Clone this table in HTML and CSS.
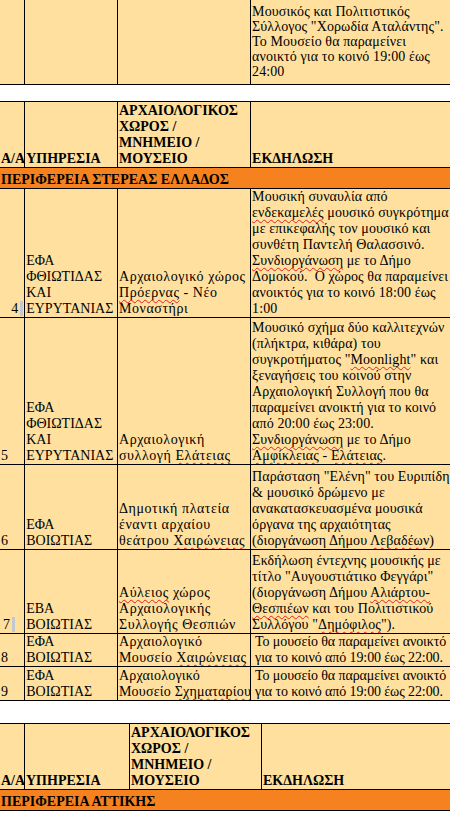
FILE: index.html
```html
<!DOCTYPE html>
<html lang="el">
<head>
<meta charset="utf-8">
<title>Εκδηλώσεις</title>
<link rel="stylesheet" href="styles.css">
</head>
<body>
<div class="page">

<table class="grid t-first">
<colgroup><col class="w1"><col class="w2"><col class="w3"><col class="w4"></colgroup>
<tr class="r-first">
<td></td><td></td><td></td>
<td class="event">Μουσικός και Πολιτιστικός<br>Σύλλογος "Χορωδία Αταλάντης".<br>Το Μουσείο θα παραμείνει<br>ανοικτό για το κοινό 19:00 έως<br>24:00</td>
</tr>
</table>

<table class="grid t-second">
<colgroup><col class="w1"><col class="w2"><col class="w3"><col class="w4"></colgroup>
<tr class="r-head">
<th>Α/Α</th><th>ΥΠΗΡΕΣΙΑ</th><th>ΑΡΧΑΙΟΛΟΓΙΚΟΣ<br>ΧΩΡΟΣ /<br>ΜΝΗΜΕΙΟ /<br>ΜΟΥΣΕΙΟ</th><th>ΕΚΔΗΛΩΣΗ</th>
</tr>
<tr class="r-region"><td colspan="4">ΠΕΡΙΦΕΡΕΙΑ ΣΤΕΡΕΑΣ ΕΛΛΑΔΟΣ</td></tr>
<tr class="r4">
<td class="num num-right">4<span class="mark"></span></td>
<td>ΕΦΑ<br>ΦΘΙΩΤΙΔΑΣ<br>ΚΑΙ<br>ΕΥΡΥΤΑΝΙΑΣ</td>
<td class="site">Αρχαιολογικό χώρος<br><span class="sp">Πρόερνας</span> - Νέο<br>Μοναστήρι</td>
<td class="event">Μουσική συναυλία από<br><span class="sp">ενδεκαμελές</span> μουσικό συγκρότημα<br>με επικεφαλής τον μουσικό και<br>συνθέτη Παντελή Θαλασσινό.<br><span class="sp">Συνδιοργάνωση</span> με το Δήμο<br>Δομοκού.&nbsp; Ο χώρος θα παραμείνει<br>ανοικτός για το κοινό 18:00 έως<br>1:00</td>
</tr>
<tr class="r5">
<td class="num">5</td>
<td>ΕΦΑ<br>ΦΘΙΩΤΙΔΑΣ<br>ΚΑΙ<br>ΕΥΡΥΤΑΝΙΑΣ</td>
<td class="site">Αρχαιολογική<br>συλλογή <span class="sp">Ελάτειας</span></td>
<td class="event">Μουσικό σχήμα δύο καλλιτεχνών<br>(πλήκτρα, κιθάρα) του<br>συγκροτήματος "<span class="sp">Moonlight</span>" και<br>ξεναγήσεις του κοινού στην<br>Αρχαιολογική Συλλογή που θα<br>παραμείνει ανοικτή για το κοινό<br>από 20:00 έως 23:00.<br><span class="sp">Συνδιοργάνωση</span> με το Δήμο<br><span class="sp">Αμφίκλειας</span> - <span class="sp">Ελάτειας</span>.</td>
</tr>
<tr class="r6">
<td class="num">6</td>
<td>ΕΦΑ<br>ΒΟΙΩΤΙΑΣ</td>
<td class="site">Δημοτική πλατεία<br>έναντι αρχαίου<br>θεάτρου <span class="sp">Χαιρώνειας</span></td>
<td class="event">Παράσταση "Ελένη" του Ευριπίδη<br>&amp; μουσικό δρώμενο με<br>ανακατασκευασμένα μουσικά<br>όργανα της αρχαιότητας<br>(διοργάνωση Δήμου <span class="sp">Λεβαδέων</span>)</td>
</tr>
<tr class="r7">
<td class="num num-seven">7<span class="mark"></span></td>
<td>ΕΒΑ<br>ΒΟΙΩΤΙΑΣ</td>
<td class="site"><span class="sp">Αύλειος</span> χώρος<br>Αρχαιολογικής<br>Συλλογής Θεσπιών</td>
<td class="event">Εκδήλωση έντεχνης μουσικής με<br>τίτλο "Αυγουστιάτικο Φεγγάρι"<br>(διοργάνωση Δήμου <span class="sp">Αλιάρτου-</span><br><span class="sp">Θεσπιέων</span> και του Πολιτιστικού<br>Συλλόγου "<span class="sp">Δημόφιλος</span>").</td>
</tr>
<tr class="r8">
<td class="num">8</td>
<td>ΕΦΑ<br>ΒΟΙΩΤΙΑΣ</td>
<td class="site site-mid">Αρχαιολογικό<br>Μουσείο <span class="sp">Χαιρώνειας</span></td>
<td class="event event-tight">Το μουσείο θα παραμείνει ανοικτό<br>για το κοινό από 19:00 έως 22:00.</td>
</tr>
<tr class="r9">
<td class="num">9</td>
<td>ΕΦΑ<br>ΒΟΙΩΤΙΑΣ</td>
<td class="site site-narrow">Αρχαιολογικό<br>Μουσείο <span class="sp">Σχηματαρίου</span></td>
<td class="event event-tight">Το μουσείο θα παραμείνει ανοικτό<br>για το κοινό από 19:00 έως 22:00.</td>
</tr>
</table>

<table class="grid t-third">
<colgroup><col class="w1"><col class="w2b"><col class="w3"><col class="w4"></colgroup>
<tr class="r-head">
<th>Α/Α</th><th>ΥΠΗΡΕΣΙΑ</th><th>ΑΡΧΑΙΟΛΟΓΙΚΟΣ<br>ΧΩΡΟΣ /<br>ΜΝΗΜΕΙΟ /<br>ΜΟΥΣΕΙΟ</th><th>ΕΚΔΗΛΩΣΗ</th>
</tr>
<tr class="r-region"><td colspan="4">ΠΕΡΙΦΕΡΕΙΑ ΑΤΤΙΚΗΣ</td></tr>
</table>

</div>
</body>
</html>
```

FILE: styles.css
```css
html, body {
  margin: 0;
  padding: 0;
  background: #ffffff;
  overflow: hidden;
}

body {
  font-family: "Liberation Serif", "Times New Roman", serif;
  font-size: 14px;
  color: #000000;
}

.page {
  margin-left: -1px;
  width: 480px;
}

.grid {
  border-collapse: collapse;
  table-layout: fixed;
  width: 480px;
  background: #ffe09f;
}

.grid td,
.grid th {
  border: 1px solid #000000;
  padding: 0 1px;
  vertical-align: bottom;
  text-align: left;
  white-space: nowrap;
  overflow: hidden;
  line-height: 16px;
}

.grid th {
  font-weight: bold;
}

.w1 { width: 25px; }
.w2 { width: 92px; }
.w2b { width: 105px; }
.w3 { width: 132px; }
.w4 { width: 226px; }

.grid td.site {
  letter-spacing: 0.55px;
}

.grid td.site-mid {
  letter-spacing: 0.4px;
}

.grid td.site-narrow {
  letter-spacing: 0.2px;
}

.grid td.event {
  letter-spacing: 0.1px;
}

.grid td.event-tight {
  letter-spacing: -0.1px;
  padding-left: 4px;
}

.t-first {
  margin-top: -6px;
}

.grid .r-first td {
  height: 84px;
  padding-bottom: 5px;
  line-height: 15px;
}

.t-second {
  margin-top: 16px;
}

.t-third {
  margin-top: 22px;
}

.r-head th {
  height: 65px;
}

.grid .r-region td {
  background: #f5821f;
  font-weight: bold;
  height: 20px;
}

.r4 td { height: 128px; }
.r5 td { height: 146px; }
.r6 td { height: 84px; }
.r7 td { height: 83px; }
.r8 td { height: 30px; }
.r9 td { height: 33px; }

.grid td.num-right {
  text-align: right;
  padding-right: 1px;
}

.grid td.num-seven {
  padding-left: 3px;
}

.mark {
  display: inline-block;
  width: 3px;
  height: 15px;
  margin-left: 2px;
  background: #c3c7cf;
  vertical-align: -3px;
}

.sp {
  text-decoration: underline wavy #e02020;
  text-decoration-thickness: 1px;
  text-underline-offset: 2px;
  text-decoration-skip-ink: none;
}
```
